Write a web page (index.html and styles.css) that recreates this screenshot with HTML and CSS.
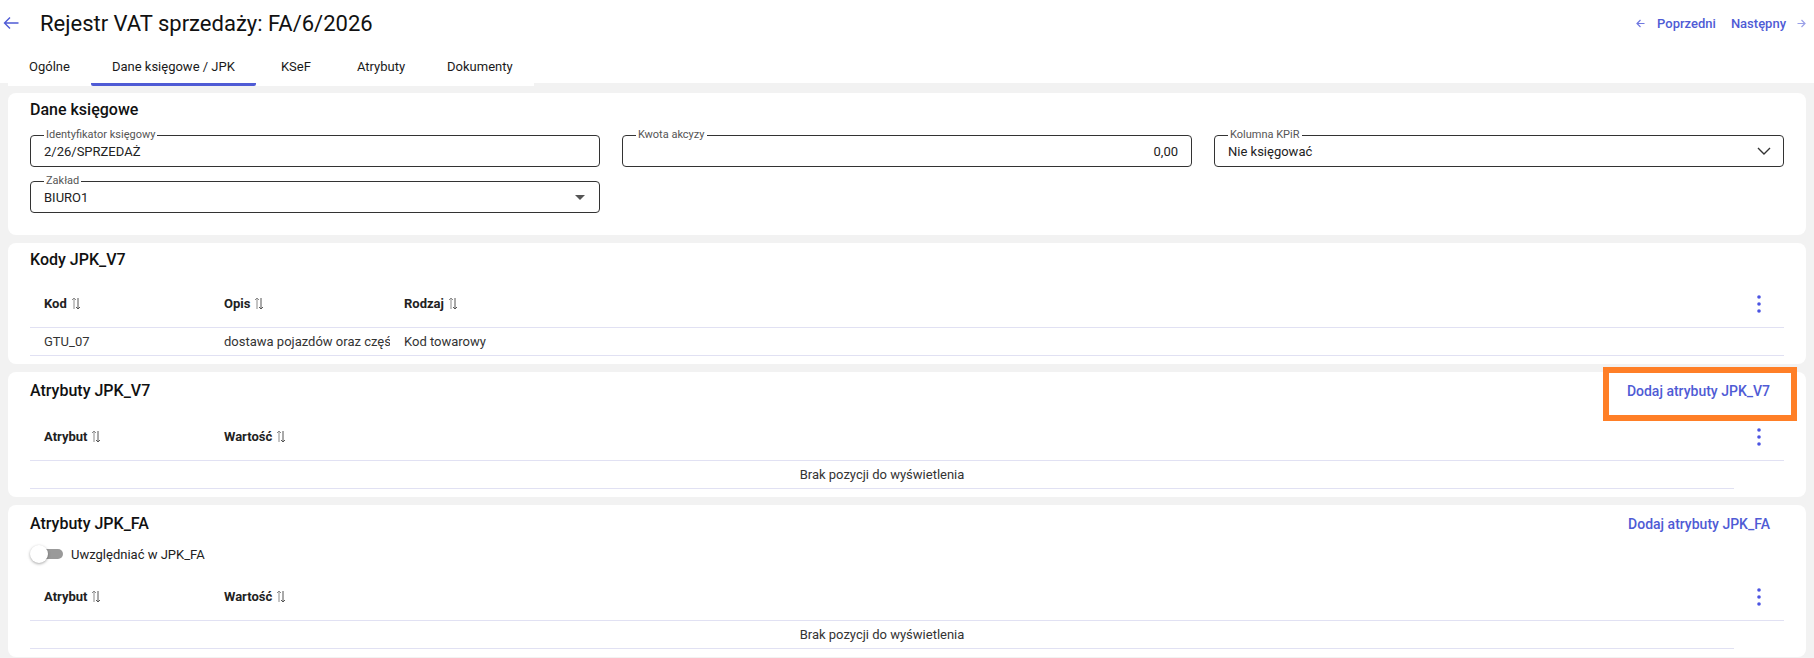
FILE: index.html
```html
<!DOCTYPE html>
<html lang="pl">
<head>
    <meta charset="UTF-8">
    <meta name="viewport" content="width=device-width, initial-scale=1.0">
    <title>Rejestr VAT sprzedaży: FA/6/2026</title>
    <link rel="stylesheet" href="styles.css">
</head>
<body>
    <header class="top">
        <div class="top-left">
            <a class="back" href="#">
                <svg width="16" height="14" viewBox="0 0 16 14"><path d="M15.5 7H1.5M7 1.5L1.5 7L7 12.5" fill="none" stroke="#4f5bd5" stroke-width="1.4"/></svg>
            </a>
            <h1>Rejestr VAT sprzedaży: FA/6/2026</h1>
        </div>
        <nav class="pager">
            <a class="pager-link" href="#">
                <svg width="9" height="9" viewBox="0 0 9 9"><path d="M8.5 4.5H1M4.5 1L1 4.5L4.5 8" fill="none" stroke="#6f78e0" stroke-width="1.2"/></svg>
                Poprzedni
            </a>
            <a class="pager-link next" href="#">
                Następny
                <svg width="9" height="9" viewBox="0 0 9 9"><path d="M0.5 4.5H8M4.5 1L8 4.5L4.5 8" fill="none" stroke="#9aa0e8" stroke-width="1.2"/></svg>
            </a>
        </nav>
    </header>

    <div class="tabs-row">
        <div class="tabs">
            <a class="tab" href="#">Ogólne</a>
            <a class="tab active" href="#">Dane księgowe / JPK</a>
            <a class="tab" href="#">KSeF</a>
            <a class="tab" href="#">Atrybuty</a>
            <a class="tab" href="#">Dokumenty</a>
        </div>
    </div>

    <main class="content">
        <!-- Dane księgowe -->
        <section class="card">
            <h2 class="card-title">Dane księgowe</h2>
            <div class="fields">
                <div class="field">
                    <span class="field-label">Identyfikator księgowy</span>
                    <span class="field-value">2/26/SPRZEDAŻ</span>
                </div>
                <div class="field">
                    <span class="field-label">Kwota akcyzy</span>
                    <span class="field-value right">0,00</span>
                </div>
                <div class="field">
                    <span class="field-label">Kolumna KPiR</span>
                    <span class="field-value">Nie księgować</span>
                    <svg class="chevron" width="14" height="8" viewBox="0 0 14 8"><path d="M1 1L7 7L13 1" fill="none" stroke="#333" stroke-width="1.4"/></svg>
                </div>
                <div class="field">
                    <span class="field-label">Zakład</span>
                    <span class="field-value">BIURO1</span>
                    <span class="caret"></span>
                </div>
            </div>
        </section>

        <!-- Kody JPK_V7 -->
        <section class="card">
            <h2 class="card-title">Kody JPK_V7</h2>
            <div class="grid">
                <div class="grid-row head cols-3">
                    <div class="th">Kod <svg class="sort" width="10" height="13" viewBox="0 0 10 13"><path d="M3 12V1M1 3L3 1L5 3" fill="none" stroke="#8a8a8a"/><path d="M7 1V12M5 10L7 12L9 10" fill="none" stroke="#555"/></svg></div>
                    <div class="th">Opis <svg class="sort" width="10" height="13" viewBox="0 0 10 13"><path d="M3 12V1M1 3L3 1L5 3" fill="none" stroke="#8a8a8a"/><path d="M7 1V12M5 10L7 12L9 10" fill="none" stroke="#555"/></svg></div>
                    <div class="th">Rodzaj <svg class="sort" width="10" height="13" viewBox="0 0 10 13"><path d="M3 12V1M1 3L3 1L5 3" fill="none" stroke="#8a8a8a"/><path d="M7 1V12M5 10L7 12L9 10" fill="none" stroke="#555"/></svg></div>
                    <div class="th-menu">
                        <svg width="4" height="18" viewBox="0 0 4 18"><circle cx="2" cy="2" r="1.8" fill="#4b54e2"/><circle cx="2" cy="9" r="1.8" fill="#4b54e2"/><circle cx="2" cy="16" r="1.8" fill="#4b54e2"/></svg>
                    </div>
                </div>
                <div class="grid-row cols-3">
                    <div class="td">GTU_07</div>
                    <div class="td">dostawa pojazdów oraz części samochodowych</div>
                    <div class="td">Kod towarowy</div>
                    <div class="td"></div>
                </div>
            </div>
        </section>

        <!-- Atrybuty JPK_V7 -->
        <section class="card">
            <div class="card-head">
                <h2 class="card-title">Atrybuty JPK_V7</h2>
                <a class="link-btn highlight" href="#">Dodaj atrybuty JPK_V7</a>
            </div>
            <div class="grid">
                <div class="grid-row head cols-2">
                    <div class="th">Atrybut <svg class="sort" width="10" height="13" viewBox="0 0 10 13"><path d="M3 12V1M1 3L3 1L5 3" fill="none" stroke="#8a8a8a"/><path d="M7 1V12M5 10L7 12L9 10" fill="none" stroke="#555"/></svg></div>
                    <div class="th">Wartość <svg class="sort" width="10" height="13" viewBox="0 0 10 13"><path d="M3 12V1M1 3L3 1L5 3" fill="none" stroke="#8a8a8a"/><path d="M7 1V12M5 10L7 12L9 10" fill="none" stroke="#555"/></svg></div>
                    <div class="th-menu">
                        <svg width="4" height="18" viewBox="0 0 4 18"><circle cx="2" cy="2" r="1.8" fill="#4b54e2"/><circle cx="2" cy="9" r="1.8" fill="#4b54e2"/><circle cx="2" cy="16" r="1.8" fill="#4b54e2"/></svg>
                    </div>
                </div>
                <div class="grid-empty">Brak pozycji do wyświetlenia</div>
            </div>
        </section>

        <!-- Atrybuty JPK_FA -->
        <section class="card">
            <div class="card-head">
                <h2 class="card-title">Atrybuty JPK_FA</h2>
                <a class="link-btn" href="#">Dodaj atrybuty JPK_FA</a>
            </div>
            <label class="switch-row">
                <span class="switch"><span class="switch-track"></span><span class="switch-knob"></span></span>
                Uwzględniać w JPK_FA
            </label>
            <div class="grid tight">
                <div class="grid-row head cols-2">
                    <div class="th">Atrybut <svg class="sort" width="10" height="13" viewBox="0 0 10 13"><path d="M3 12V1M1 3L3 1L5 3" fill="none" stroke="#8a8a8a"/><path d="M7 1V12M5 10L7 12L9 10" fill="none" stroke="#555"/></svg></div>
                    <div class="th">Wartość <svg class="sort" width="10" height="13" viewBox="0 0 10 13"><path d="M3 12V1M1 3L3 1L5 3" fill="none" stroke="#8a8a8a"/><path d="M7 1V12M5 10L7 12L9 10" fill="none" stroke="#555"/></svg></div>
                    <div class="th-menu">
                        <svg width="4" height="18" viewBox="0 0 4 18"><circle cx="2" cy="2" r="1.8" fill="#4b54e2"/><circle cx="2" cy="9" r="1.8" fill="#4b54e2"/><circle cx="2" cy="16" r="1.8" fill="#4b54e2"/></svg>
                    </div>
                </div>
                <div class="grid-empty">Brak pozycji do wyświetlenia</div>
            </div>
        </section>
    </main>
</body>
</html>
```

FILE: styles.css
```css
body {
    margin: 0;
    font-family: Roboto, "Noto Sans", Arial, sans-serif;
    color: #212121;
    background-color: #fff;
}

a {
    text-decoration: none;
    color: inherit;
}

/* naglowek */
.top {
    height: 46px;
    display: flex;
    align-items: center;
    justify-content: space-between;
    padding: 0 8px 0 3px;
}

.top-left {
    display: flex;
    align-items: center;
}

.back {
    display: flex;
    width: 16px;
}

.top h1 {
    margin: 0 0 0 21px;
    font-size: 22px;
    font-weight: 400;
    color: #111;
}

.pager {
    display: flex;
    gap: 15px;
}

.pager-link {
    display: flex;
    align-items: center;
    gap: 12px;
    font-size: 13px;
    font-weight: 500;
    color: #4f5bd5;
}

.pager-link.next {
    gap: 11px;
}

/* zakladki */
.tabs-row {
    margin-top: 4px;
    padding: 0 8px;
    background: linear-gradient(#fff 0 33px, #f2f2f2 33px);
}

.tabs {
    display: inline-flex;
    background-color: #fff;
}

.tab {
    min-width: 80px;
    box-sizing: border-box;
    text-align: center;
    padding: 9px 21px 8px;
    font-size: 13px;
    line-height: 16px;
    font-weight: 400;
    color: #1a1a1a;
    border-bottom: 3px solid transparent;
}

.tab.active {
    border-bottom-color: #4f5bd5;
    border-radius: 0 0 2px 2px;
}

/* tresc */
.content {
    background-color: #f2f2f2;
    padding: 7px 8px 3px;
    display: flex;
    flex-direction: column;
    gap: 8px;
}

.card {
    background-color: #fff;
    border-radius: 8px;
    padding: 7px 22px 8px;
}

.card-title {
    margin: 0;
    font-size: 16px;
    line-height: 20px;
    font-weight: 500;
    color: #111;
}

.card-head {
    height: 24px;
    display: flex;
    align-items: center;
    justify-content: space-between;
}

.link-btn {
    position: relative;
    padding: 0 14px;
    font-size: 14px;
    line-height: 24px;
    font-weight: 500;
    color: #4f5bd5;
}

/* ramka wyrozniajaca */
.link-btn.highlight::after {
    content: "";
    position: absolute;
    top: -12px;
    right: -13px;
    bottom: -18px;
    left: -10px;
    border: 6px solid #ff7f27;
}

/* pola formularza */
.fields {
    display: grid;
    grid-template-columns: repeat(3, 1fr);
    gap: 14px 22px;
    margin: 15px 0 14px;
}

.field {
    position: relative;
    height: 32px;
    box-sizing: border-box;
    border: 1px solid #333;
    border-radius: 4px;
    padding: 0 13px;
    display: flex;
    align-items: center;
    font-size: 13px;
    color: #222;
}

.field-label {
    position: absolute;
    top: -7px;
    left: 13px;
    padding: 0 2px;
    background-color: #fff;
    font-size: 11px;
    line-height: 12px;
    color: #555;
}

.field-value {
    flex: 1;
}

.field-value.right {
    text-align: right;
}

.chevron {
    margin-right: -1px;
}

.caret {
    width: 0;
    height: 0;
    border-left: 5px solid transparent;
    border-right: 5px solid transparent;
    border-top: 5px solid #555;
    margin-right: 1px;
}

/* tabele */
.grid {
    margin-top: 10px;
}

.grid.tight {
    margin-top: 9px;
}

.grid-row {
    display: grid;
    height: 28px;
    box-sizing: border-box;
    align-items: center;
    border-bottom: 1px solid #e1e1f3;
}

.grid-row.head {
    height: 48px;
}

.cols-3 {
    grid-template-columns: 180px 180px 1fr 50px;
}

.cols-2 {
    grid-template-columns: 180px 1fr 50px;
}

.th {
    padding-left: 14px;
    display: flex;
    align-items: center;
    gap: 4px;
    font-size: 13px;
    font-weight: 700;
    color: #222;
}

.th-menu {
    display: flex;
    justify-content: center;
}

.td {
    padding-left: 14px;
    font-size: 13px;
    color: #333;
    white-space: nowrap;
    overflow: hidden;
}

.grid-empty {
    width: calc(100% - 50px);
    height: 28px;
    box-sizing: border-box;
    display: flex;
    align-items: center;
    justify-content: center;
    border-bottom: 1px solid #e1e1f3;
    font-size: 13px;
    color: #333;
}

/* przelacznik */
.switch-row {
    margin-top: 8px;
    height: 20px;
    display: flex;
    align-items: center;
    gap: 8px;
    font-size: 13px;
    color: #222;
}

.switch {
    position: relative;
    width: 33px;
    height: 18px;
    display: flex;
    align-items: center;
}

.switch-track {
    width: 28px;
    height: 10px;
    margin-left: 5px;
    border-radius: 5px;
    background-color: #9a9a9a;
}

.switch-knob {
    position: absolute;
    left: 0;
    top: 0;
    width: 18px;
    height: 18px;
    border-radius: 50%;
    background-color: #fff;
    box-shadow: 0 1px 3px rgba(0,0,0,0.35);
}
```
